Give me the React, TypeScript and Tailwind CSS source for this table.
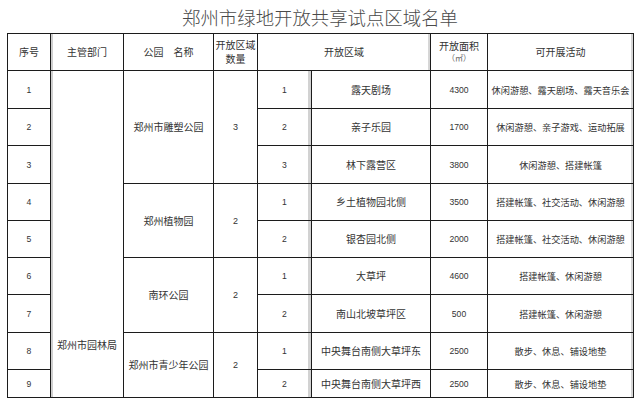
import React from "react"

const ROWS = [
  { no: 1, idx: 1, area: "露天剧场", size: "4300", act: "休闲游憩、露天剧场、露天音乐会" },
  { no: 2, idx: 2, area: "亲子乐园", size: "1700", act: "休闲游憩、亲子游戏、运动拓展" },
  { no: 3, idx: 3, area: "林下露营区", size: "3800", act: "休闲游憩、搭建帐篷" },
  { no: 4, idx: 1, area: "乡土植物园北侧", size: "3500", act: "搭建帐篷、社交活动、休闲游憩" },
  { no: 5, idx: 2, area: "银杏园北侧", size: "2000", act: "搭建帐篷、社交活动、休闲游憩" },
  { no: 6, idx: 1, area: "大草坪", size: "4600", act: "搭建帐篷、休闲游憩" },
  { no: 7, idx: 2, area: "南山北坡草坪区", size: "500", act: "搭建帐篷、休闲游憩" },
  { no: 8, idx: 1, area: "中央舞台南侧大草坪东", size: "2500", act: "散步、休息、铺设地垫" },
  { no: 9, idx: 2, area: "中央舞台南侧大草坪西", size: "2500", act: "散步、休息、铺设地垫" },
]

// first row of each park group -> park name, count, row span class
const PARKS: Record<number, { name: string; count: string; span: string }> = {
  1: { name: "郑州市雕塑公园", count: "3", span: "row-span-3" },
  4: { name: "郑州植物园", count: "2", span: "row-span-2" },
  6: { name: "南环公园", count: "2", span: "row-span-2" },
  8: { name: "郑州市青少年公园", count: "2", span: "row-span-2" },
}

const cjk = "font-['Noto_Sans_CJK_SC','Noto_Sans',sans-serif]"
const num = "font-['Liberation_Sans','Noto_Sans_CJK_SC',sans-serif] text-[8.6px]"

function Cell({ className = "", children }: { className?: string; children?: React.ReactNode }) {
  return (
    <div className={`flex items-center justify-center bg-white text-center text-[#333] ${className}`}>
      {children}
    </div>
  )
}

export default function App() {
  return (
    <div className={`w-[640px] h-[408px] bg-white ${cjk}`}>
      <div className="h-[33px] flex items-center justify-center">
        <h1 className="text-[18.4px] font-extralight leading-none text-[#4a4a4a] pt-[1px]">郑州市绿地开放共享试点区域名单</h1>
      </div>
      <div className="ml-[7px] w-[627px] bg-[#1c1c1c] p-px">
        <div className="grid gap-px grid-cols-[42px_72px_89px_43px_53px_118px_56px_145px] grid-rows-[36px_37px_36px_37px_36px_36px_36px_37px_36px_27px] text-[10px] leading-[14px]">
          <Cell>序号</Cell>
          <Cell className="shadow-[inset_2px_0_0_#cfcfcf]">主管部门</Cell>
          <Cell>公园　名称</Cell>
          <Cell className="leading-[14.5px]">
            开放区域
            <br />
            数量
          </Cell>
          <Cell className="col-span-2 shadow-[inset_-2px_0_0_#d6d6d6]">开放区域</Cell>
          <Cell className="leading-[12.5px] flex-col">
            <span>开放面积</span>
            <span className="text-[8px] text-[#666]">（㎡）</span>
          </Cell>
          <Cell className="shadow-[inset_-2px_0_0_#d6d6d6]">可开展活动</Cell>

          {ROWS.map((r) => {
            const park = PARKS[r.no]
            return (
              <React.Fragment key={r.no}>
                <Cell className={num}>{r.no}</Cell>
                {r.no === 1 && (
                  <Cell className="row-span-9 items-start pt-[267px] shadow-[inset_2px_0_0_#cfcfcf]">郑州市园林局</Cell>
                )}
                {park && <Cell className={park.span}>{park.name}</Cell>}
                {park && <Cell className={`${park.span} ${num} text-[9px]`}>{park.count}</Cell>}
                <Cell className={`${num} shadow-[inset_-3px_0_0_#d2d2d2]`}>{r.idx}</Cell>
                <Cell>{r.area}</Cell>
                <Cell className={num}>{r.size}</Cell>
                <Cell className="text-[9.2px] whitespace-nowrap shadow-[inset_-2px_0_0_#d6d6d6]">{r.act}</Cell>
              </React.Fragment>
            )
          })}
        </div>
      </div>
    </div>
  )
}
